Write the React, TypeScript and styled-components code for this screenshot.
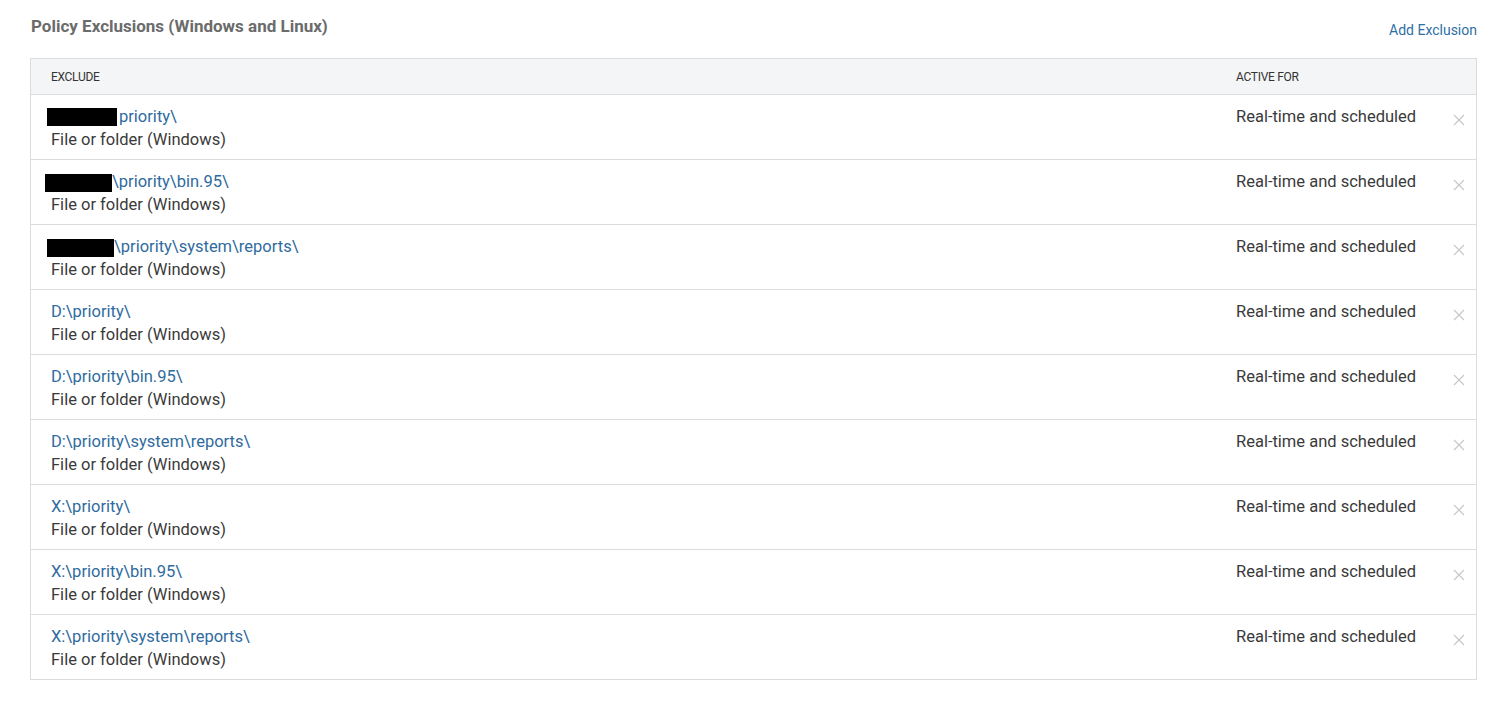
import React from "react";
import styled, { createGlobalStyle } from "styled-components";

const Global = createGlobalStyle`
  html, body { margin: 0; padding: 0; background: #fff; }
  body { font-family: Roboto, "Liberation Sans", Arial, sans-serif; color: #333; }
`;

const Page = styled.div`
  padding: 16px 22px 0 30px;
`;

const TopBar = styled.div`
  display: flex;
  justify-content: space-between;
  align-items: flex-start;
  height: 21px;
  margin-bottom: 21px;
`;

const Title = styled.h2`
  margin: 0 0 0 1px;
  font-size: 17px;
  line-height: 21px;
  font-weight: 700;
  color: #6b6b6b;
`;

const AddLink = styled.a`
  margin-top: 4px;
  font-size: 14px;
  line-height: 20px;
  color: #2f6fa6;
  text-decoration: none;
  cursor: pointer;
`;

const Table = styled.div`
  border: 1px solid #dcdcdc;
`;

const Grid = styled.div`
  display: grid;
  grid-template-columns: 1fr 198px 42px;
`;

const HeaderRow = styled(Grid)`
  height: 35px;
  background: #f4f5f6;
  border-bottom: 1px solid #dcdcdc;
  align-items: center;
`;

const HeadCell = styled.div<{ $first?: boolean }>`
  padding-left: ${(p) => (p.$first ? 20 : 0)}px;
  font-size: 12px;
  text-transform: uppercase;
  color: #333;
  letter-spacing: -0.3px;
  padding-top: 1px;
`;

const Row = styled(Grid)`
  height: 64px;
  border-bottom: 1px solid #dcdcdc;
  &:last-child { border-bottom: none; }
`;

const Cell = styled.div`
  padding: 10px 0 0 20px;
  font-size: 16.5px;
  line-height: 23px;
`;

const PathText = styled.div`
  color: #2f6b9e;
  white-space: nowrap;
`;

const TypeText = styled.div`
  color: #3a3a3a;
`;

const Redact = styled.span<{ $w: number; $ml: number; $mt: number; $mr: number }>`
  display: inline-block;
  width: ${(p) => p.$w}px;
  height: 18px;
  background: #000;
  margin-left: ${(p) => p.$ml}px;
  margin-right: ${(p) => p.$mr}px;
  vertical-align: ${(p) => p.$mt}px;
`;

const ActiveCell = styled.div`
  padding: 10px 0 0 0;
  font-size: 16.5px;
  line-height: 23px;
  color: #3a3a3a;
  white-space: nowrap;
`;

const RemoveBtn = styled.button`
  border: none;
  background: none;
  padding: 0;
  margin: 19px 0 0 19px;
  width: 12px;
  height: 12px;
  cursor: pointer;
  display: block;
`;

type Item = { path: string; redact?: { w: number; ml: number; mt: number; mr: number } };

const items: Item[] = [
  { path: "priority\\", redact: { w: 70, ml: -4, mt: -4, mr: 2 } },
  { path: "\\priority\\bin.95\\", redact: { w: 67, ml: -6, mt: -5, mr: 0 } },
  { path: "\\priority\\system\\reports\\", redact: { w: 67, ml: -4, mt: -5, mr: 0 } },
  { path: "D:\\priority\\" },
  { path: "D:\\priority\\bin.95\\" },
  { path: "D:\\priority\\system\\reports\\" },
  { path: "X:\\priority\\" },
  { path: "X:\\priority\\bin.95\\" },
  { path: "X:\\priority\\system\\reports\\" },
];

const CloseIcon = () => (
  <svg width="12" height="12" viewBox="0 0 12 12">
    <path d="M1 1 L11 11 M11 1 L1 11" stroke="#c8c8c8" strokeWidth="1.2" fill="none" />
  </svg>
);

export default function App() {
  return (
    <>
      <Global />
      <Page>
        <TopBar>
          <Title>Policy Exclusions (Windows and Linux)</Title>
          <AddLink>Add Exclusion</AddLink>
        </TopBar>
        <Table>
          <HeaderRow>
            <HeadCell $first>Exclude</HeadCell>
            <HeadCell>Active For</HeadCell>
            <div />
          </HeaderRow>
          {items.map((it, i) => (
            <Row key={i}>
              <Cell>
                <PathText>
                  {it.redact && (
                    <Redact $w={it.redact.w} $ml={it.redact.ml} $mt={it.redact.mt} $mr={it.redact.mr} />
                  )}
                  {it.path}
                </PathText>
                <TypeText>File or folder (Windows)</TypeText>
              </Cell>
              <ActiveCell>Real-time and scheduled</ActiveCell>
              <div>
                <RemoveBtn aria-label="Remove">
                  <CloseIcon />
                </RemoveBtn>
              </div>
            </Row>
          ))}
        </Table>
      </Page>
    </>
  );
}
